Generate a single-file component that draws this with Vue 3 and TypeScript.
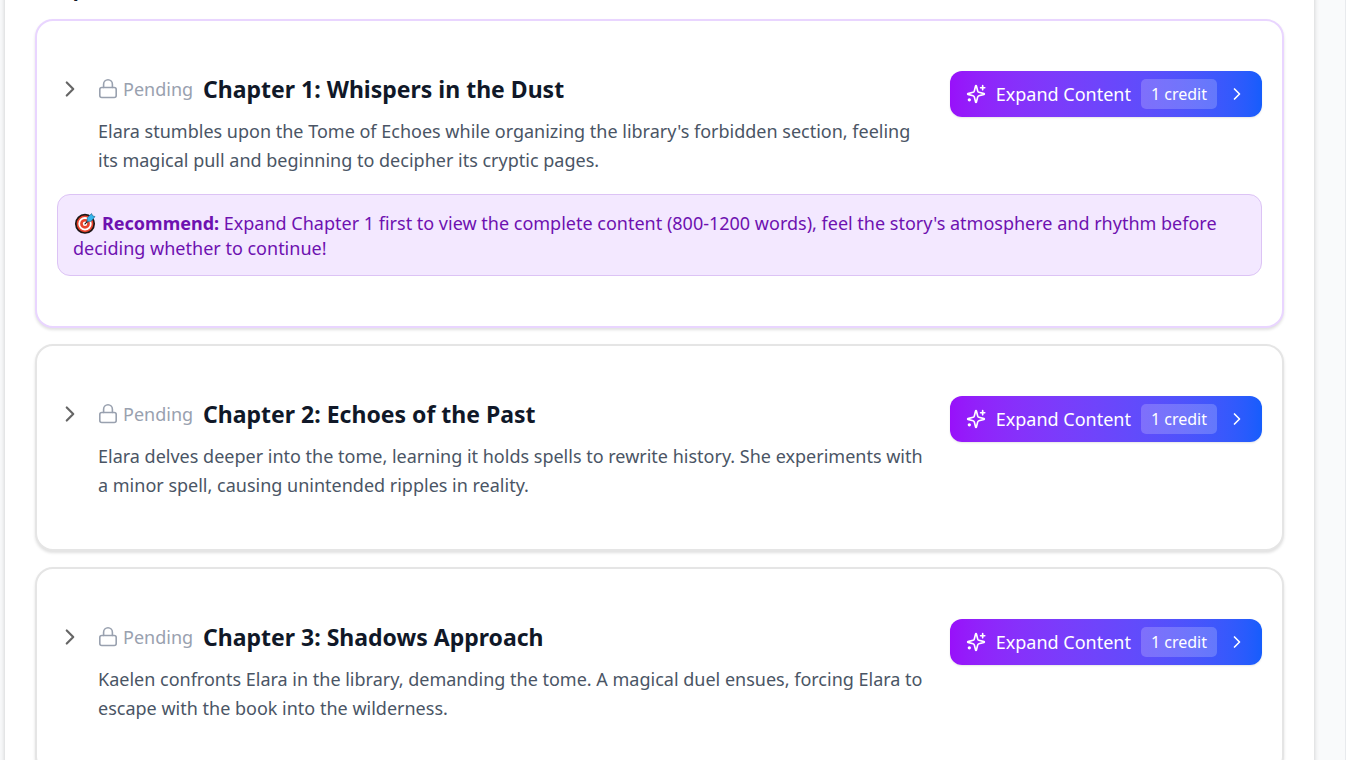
<script setup lang="ts">
interface Chapter {
  id: number
  title: string
  lines: string[]
  recommended: boolean
}

const chapters: Chapter[] = [
  {
    id: 1,
    title: 'Chapter 1: Whispers in the Dust',
    lines: [
      "Elara stumbles upon the Tome of Echoes while organizing the library's forbidden section, feeling",
      'its magical pull and beginning to decipher its cryptic pages.',
    ],
    recommended: true,
  },
  {
    id: 2,
    title: 'Chapter 2: Echoes of the Past',
    lines: [
      'Elara delves deeper into the tome, learning it holds spells to rewrite history. She experiments with',
      'a minor spell, causing unintended ripples in reality.',
    ],
    recommended: false,
  },
  {
    id: 3,
    title: 'Chapter 3: Shadows Approach',
    lines: [
      'Kaelen confronts Elara in the library, demanding the tome. A magical duel ensues, forcing Elara to',
      'escape with the book into the wilderness.',
    ],
    recommended: false,
  },
]
</script>

<template>
  <div class="page">
    <main class="panel">
      <h2 class="heading">Chapters</h2>
      <div class="list">
        <article v-for="c in chapters" :key="c.id" class="card" :class="{ recommended: c.recommended }">
          <div class="row">
            <button class="toggle" type="button" :aria-label="'Toggle ' + c.title">
              <svg width="26" height="26" viewBox="0 0 24 24"><path d="m9 18 6-6-6-6" /></svg>
            </button>
            <div class="body">
              <div class="title-row">
                <span class="status">
                  <svg width="20" height="22" viewBox="0 0 20 22">
                    <rect x="1.8" y="9.5" width="16.4" height="10" rx="2" />
                    <path d="M5.6 9.5V6.2a4.4 4.4 0 0 1 8.8 0v3.3" />
                  </svg>
                  Pending
                </span>
                <h3 class="title">{{ c.title }}</h3>
              </div>
              <p class="summary">
                <template v-for="(line, i) in c.lines" :key="i"><br v-if="i > 0" />{{ line }}</template>
              </p>
            </div>
            <button class="expand" type="button">
              <svg width="20" height="20" viewBox="0 0 24 24">
                <path d="M9.94 15.5A2 2 0 0 0 8.5 14.06l-6.14-1.58a.5.5 0 0 1 0-.96L8.5 9.94A2 2 0 0 0 9.94 8.5l1.58-6.14a.5.5 0 0 1 .96 0L14.06 8.5A2 2 0 0 0 15.5 9.94l6.14 1.58a.5.5 0 0 1 0 .96L15.5 14.06a2 2 0 0 0-1.44 1.44l-1.58 6.14a.5.5 0 0 1-.96 0z" />
                <path d="M20 2v5M22.5 4.5h-5" />
                <circle cx="4" cy="19" r="1" />
              </svg>
              <span>Expand Content</span>
              <span class="credit">1 credit</span>
              <svg class="arrow" width="20" height="20" viewBox="0 0 24 24"><path d="m9 18 6-6-6-6" /></svg>
            </button>
          </div>
          <p v-if="c.recommended" class="tip">
            <svg class="target" width="24" height="22" viewBox="0 0 24 22" role="img" aria-label="Target">
              <circle cx="12" cy="11.8" r="9.2" fill="#e8432d" stroke="#1d1616" stroke-width="1.7" />
              <circle cx="12" cy="11.8" r="5.8" fill="#e8432d" stroke="#fff" stroke-width="1.8" />
              <circle cx="12" cy="11.8" r="2.2" fill="#fff" stroke="none" />
              <path d="m12 11.8 4-4" stroke="#1d1616" stroke-width="1.2" />
              <path d="M14 9.8 14.4 5.6 18.6 1.6 19.6 3.8 22 4.6 18.4 9z" fill="#35b5ee" stroke="#1b5d7e" stroke-width="0.6" />
            </svg>
            <strong>Recommend:</strong>
            Expand Chapter 1 first to view the complete content (800-1200 words), feel the story's atmosphere and rhythm before
            deciding whether to continue!
          </p>
        </article>
      </div>
    </main>
  </div>
</template>

<style>
body {
  background: #fff;
  overflow: hidden;
}
</style>

<style scoped>
.page {
  box-sizing: border-box;
  height: 100vh;
  overflow: hidden;
  margin-right: 6px;
  padding: 0 31px 0 5px;
  background: #f9fafb;
  border-right: 1px solid #e8eaed;
  font-family: "Noto Sans", "Open Sans", sans-serif;
}
.panel {
  box-sizing: border-box;
  min-height: 100%;
  padding: 0 30px;
  background: #fff;
  box-shadow: 0 2px 5px rgba(0, 0, 0, 0.2);
}
.heading {
  margin: -27px 0 14px;
  color: #0f172a;
  font-size: 20px;
  font-weight: 700;
  line-height: 32px;
}
.list {
  display: flex;
  flex-direction: column;
  gap: 16px;
}
.card {
  padding: 50px 20px 49px;
  border: 2px solid #e5e5e5;
  border-radius: 18px;
  background: #fff;
  box-shadow: 0 2px 3px rgba(0, 0, 0, 0.12);
}
.card.recommended {
  padding-bottom: 50px;
  border-color: #e9d5ff;
}
.row {
  display: flex;
  align-items: flex-start;
}
button {
  border: 0;
  font: inherit;
  cursor: pointer;
}
svg {
  flex: none;
  fill: none;
  stroke: currentColor;
  stroke-width: 2;
  stroke-linecap: round;
  stroke-linejoin: round;
}
.toggle {
  display: flex;
  align-items: center;
  flex: none;
  width: 41px;
  height: 36px;
  padding: 0;
  background: transparent;
  color: #666;
}
.body {
  flex: 1;
  min-width: 0;
}
.title-row {
  display: flex;
  align-items: center;
  gap: 10px;
  height: 36px;
  margin-bottom: 10px;
}
.status {
  display: flex;
  align-items: center;
  gap: 5px;
  color: #99a1af;
  font-size: 18px;
}
.status svg {
  stroke-width: 1.6;
}
.title {
  margin: 0;
  color: #101828;
  font-size: 23px;
  font-weight: 700;
}
.summary {
  margin: 0;
  color: #4a5565;
  font-size: 18px;
  line-height: 29px;
  white-space: nowrap;
}
.expand {
  display: flex;
  align-items: center;
  flex: none;
  gap: 10px;
  height: 46px;
  padding: 0 15px 0 16px;
  border-radius: 12px;
  background: linear-gradient(90deg in oklab, #9810fa, #155dfc);
  box-shadow: 0 1px 2px rgba(0, 0, 0, 0.1);
  color: #fff;
  font-size: 18px;
}
.credit {
  padding: 0 10px;
  border-radius: 5px;
  background: rgba(255, 255, 255, 0.2);
  font-size: 16px;
  line-height: 30px;
}
.tip {
  margin: 19px 0 0;
  padding: 16px 15px 14px;
  border: 1px solid #dcc3f5;
  border-radius: 13px;
  background: #f3e8ff;
  color: #6e11b0;
  font-size: 18px;
  line-height: 25px;
}
.target {
  margin-right: 5px;
  vertical-align: -4px;
}
</style>
